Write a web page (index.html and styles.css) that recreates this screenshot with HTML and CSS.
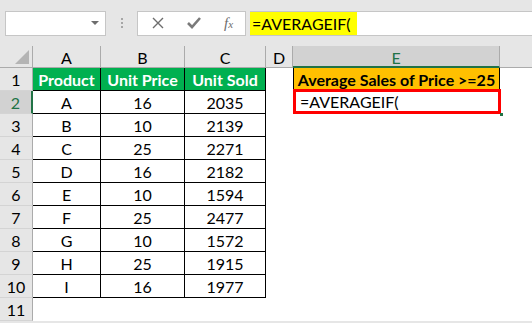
FILE: index.html
```html
<!DOCTYPE html>
<html lang="en">
<head>
    <meta charset="UTF-8">
    <title>AVERAGEIF</title>
    <link rel="stylesheet" href="styles.css">
</head>
<body>
    <div class="formula-bar">
        <div class="name-box">
            <span class="caret"></span>
        </div>
        <div class="grip"><i></i><i></i><i></i></div>
        <div class="fx-box">
            <svg class="icon" width="14" height="14" viewBox="0 0 14 14">
                <path d="M2 2 L12 12 M12 2 L2 12" stroke="#6d6d6d" stroke-width="1.4" fill="none"/>
            </svg>
            <svg class="icon" width="16" height="14" viewBox="0 0 16 14">
                <path d="M2 7 L6 11 L14 2" stroke="#7a7a7a" stroke-width="2.6" fill="none"/>
            </svg>
            <span class="fx">f<sub>x</sub></span>
        </div>
        <div class="formula-input"><span class="highlight">=AVERAGEIF(</span></div>
    </div>

    <div class="sheet">
        <div class="corner"><span class="corner-tri"></span></div>
        <div class="col-head">A</div>
        <div class="col-head">B</div>
        <div class="col-head">C</div>
        <div class="col-head">D</div>
        <div class="col-head active">E</div>
        <div class="col-head last"></div>

        <div class="row-head">1</div>
        <div class="cell title">Product</div>
        <div class="cell title">Unit Price</div>
        <div class="cell title">Unit Sold</div>
        <div class="cell blank"></div>
        <div class="cell label">Average Sales of Price &gt;=25</div>
        <div class="cell blank"></div>

        <div class="row-head active">2</div>
        <div class="cell">A</div>
        <div class="cell">16</div>
        <div class="cell">2035</div>
        <div class="cell blank"></div>
        <div class="cell editing">=AVERAGEIF(<span class="handle"></span></div>
        <div class="cell blank"></div>

        <div class="row-head">3</div>
        <div class="cell">B</div>
        <div class="cell">10</div>
        <div class="cell">2139</div>
        <div class="cell blank"></div>
        <div class="cell blank"></div>
        <div class="cell blank"></div>

        <div class="row-head">4</div>
        <div class="cell">C</div>
        <div class="cell">25</div>
        <div class="cell">2271</div>
        <div class="cell blank"></div>
        <div class="cell blank"></div>
        <div class="cell blank"></div>

        <div class="row-head">5</div>
        <div class="cell">D</div>
        <div class="cell">16</div>
        <div class="cell">2182</div>
        <div class="cell blank"></div>
        <div class="cell blank"></div>
        <div class="cell blank"></div>

        <div class="row-head">6</div>
        <div class="cell">E</div>
        <div class="cell">10</div>
        <div class="cell">1594</div>
        <div class="cell blank"></div>
        <div class="cell blank"></div>
        <div class="cell blank"></div>

        <div class="row-head">7</div>
        <div class="cell">F</div>
        <div class="cell">25</div>
        <div class="cell">2477</div>
        <div class="cell blank"></div>
        <div class="cell blank"></div>
        <div class="cell blank"></div>

        <div class="row-head">8</div>
        <div class="cell">G</div>
        <div class="cell">10</div>
        <div class="cell">1572</div>
        <div class="cell blank"></div>
        <div class="cell blank"></div>
        <div class="cell blank"></div>

        <div class="row-head">9</div>
        <div class="cell">H</div>
        <div class="cell">25</div>
        <div class="cell">1915</div>
        <div class="cell blank"></div>
        <div class="cell blank"></div>
        <div class="cell blank"></div>

        <div class="row-head">10</div>
        <div class="cell">I</div>
        <div class="cell">16</div>
        <div class="cell">1977</div>
        <div class="cell blank"></div>
        <div class="cell blank"></div>
        <div class="cell blank"></div>

        <div class="row-head">11</div>
        <div class="cell blank"></div>
        <div class="cell blank"></div>
        <div class="cell blank"></div>
        <div class="cell blank"></div>
        <div class="cell blank"></div>
        <div class="cell blank"></div>
    </div>
</body>
</html>
```

FILE: styles.css
```css
body {
    margin: 0;
    background-color: #e6e6e6;
    font-family: Lato, "Open Sans", sans-serif;
    font-size: 16px;
    color: #000;
    width: 532px;
    height: 323px;
    overflow: hidden;
}

/* formula bar */
.formula-bar {
    display: flex;
    align-items: center;
    height: 46px;
    padding-left: 5px;
    box-sizing: border-box;
}

.name-box {
    width: 101px;
    height: 25px;
    box-sizing: border-box;
    background-color: #fff;
    border: 1px solid #c6c6c6;
    display: flex;
    align-items: center;
    justify-content: flex-end;
    padding-right: 6px;
}

.caret {
    width: 0;
    height: 0;
    border-left: 4px solid transparent;
    border-right: 4px solid transparent;
    border-top: 4px solid #6d6d6d;
}

.grip {
    width: 31px;
    display: flex;
    flex-direction: column;
    align-items: center;
    gap: 2px;
}

.grip i {
    width: 2px;
    height: 2px;
    background-color: #a6a6a6;
}

.fx-box {
    width: 109px;
    height: 25px;
    box-sizing: border-box;
    background-color: #fff;
    border: 1px solid #c6c6c6;
    display: flex;
    align-items: center;
    padding-left: 13px;
}

.fx-box .icon {
    margin-right: 21px;
}

.fx-box .icon + .icon {
    margin-right: 22px;
}

.fx {
    font-family: "Liberation Serif", serif;
    font-style: italic;
    font-size: 15px;
    color: #6d6d6d;
}

.fx sub {
    font-size: 11px;
    vertical-align: 0;
}

.formula-input {
    flex: 1;
    height: 25px;
    margin-left: 4px;
    box-sizing: border-box;
    background-color: #fff;
    border-top: 1px solid #c6c6c6;
    border-bottom: 1px solid #c6c6c6;
    display: flex;
}

.highlight {
    background-color: #ffff00;
    width: 107px;
    padding-left: 2px;
    line-height: 23px;
    box-sizing: border-box;
}

/* sheet grid */
.sheet {
    display: grid;
    grid-template-columns: 33px 68px 84px 81px 27px 207px 1fr;
    grid-template-rows: 22px repeat(11, 23px);
    background-color: #fff;
}

.corner,
.col-head,
.row-head {
    background-color: #e6e6e6;
    box-sizing: border-box;
    display: flex;
    align-items: center;
    justify-content: center;
}

.corner {
    border-right: 1px solid #ababab;
    border-bottom: 1px solid #ababab;
    position: relative;
}

.corner-tri {
    position: absolute;
    right: 3px;
    bottom: 3px;
    width: 0;
    height: 0;
    border-left: 14px solid transparent;
    border-bottom: 14px solid #b4b4b4;
}

.col-head {
    border-right: 1px solid #ababab;
    border-bottom: 1px solid #ababab;
    padding-top: 2px;
}

.col-head.last {
    border-right: none;
}

.col-head.active {
    background-color: #d2d2d2;
    color: #217346;
    border-bottom: 2px solid #217346;
}

.row-head {
    border-right: 1px solid #ababab;
    border-bottom: 1px solid #d4d4d4;
}

.row-head.active {
    background-color: #d2d2d2;
    color: #217346;
    border-right: 2px solid #217346;
}

.cell {
    box-sizing: border-box;
    border-right: 1px solid #000;
    border-bottom: 1px solid #000;
    display: flex;
    align-items: center;
    justify-content: center;
    white-space: nowrap;
}

.cell.blank {
    border: none;
}

.cell.title {
    background-color: #00b050;
    color: #fff;
    font-weight: bold;
}

.cell.label {
    background-color: #ffc000;
    font-weight: bold;
    border-left: 1px solid #000;
}

.cell.editing {
    justify-content: flex-start;
    padding-left: 4px;
    margin: -2px -1px 0 0;
    border: 3px solid #f00;
    position: relative;
}

.handle {
    position: absolute;
    right: -5px;
    bottom: -5px;
    width: 3px;
    height: 3px;
    background-color: #217346;
}
```
